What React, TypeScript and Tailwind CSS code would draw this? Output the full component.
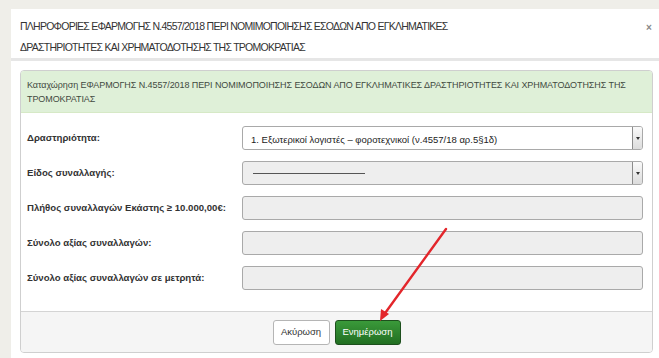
import type { ReactNode } from "react";

const rows = [
  { label: "Δραστηριότητα:", kind: "select", value: "1. Εξωτερικοί λογιστές – φοροτεχνικοί (ν.4557/18 αρ.5§1δ)", disabled: false },
  { label: "Είδος συναλλαγής:", kind: "select", value: "dash", disabled: true },
  { label: "Πλήθος συναλλαγών Εκάστης ≥ 10.000,00€:", kind: "input", value: "", disabled: true },
  { label: "Σύνολο αξίας συναλλαγών:", kind: "input", value: "", disabled: true },
  { label: "Σύνολο αξίας συναλλαγών σε μετρητά:", kind: "input", value: "", disabled: true },
];

function Field({ kind, value, disabled }: { kind: string; value: string; disabled: boolean }) {
  let inner: ReactNode = null;
  if (value === "dash") {
    inner = <span className="ml-[10px] block h-px w-[112px] bg-[#555]" />;
  } else if (value) {
    inner = <span className="pl-[8px] text-[9.5px] text-[#222]">{value}</span>;
  }
  return (
    <div
      className={`flex h-[24px] flex-1 items-center overflow-hidden rounded-[3px] border border-[#a9a9a9] ${
        disabled ? "bg-[#eeeeee]" : "bg-white"
      }`}
    >
      <div className="flex-1">{inner}</div>
      {kind === "select" ? (
        <div className="flex h-full w-[10px] items-center justify-center border-l border-[#8c8c8c] bg-gradient-to-b from-[#fafafa] to-[#dcdcdc]">
          <span className="block h-0 w-0 border-x-[2px] border-t-[3px] border-x-transparent border-t-[#333]" />
        </div>
      ) : null}
    </div>
  );
}

export default function App() {
  return (
    <div
      className="relative h-[358px] w-[659px] overflow-hidden bg-[#efeee9] pl-[11px] pt-[9px]"
      style={{ fontFamily: '"Liberation Sans", Arial, sans-serif' }}
    >
      <div className="flex h-[360px] w-[651px] flex-col bg-white">
        <header className="relative h-[52px] border-b-[3px] border-[#e6e6e6] px-[9px] pt-[7px]">
          <h1 className="w-[470px] text-[10.5px] leading-[21px] tracking-[-0.75px] text-[#333]">
            ΠΛΗΡΟΦΟΡΙΕΣ ΕΦΑΡΜΟΓΗΣ Ν.4557/2018 ΠΕΡΙ ΝΟΜΙΜΟΠΟΙΗΣΗΣ ΕΣΟΔΩΝ ΑΠΟ ΕΓΚΛΗΜΑΤΙΚΕΣ
            ΔΡΑΣΤΗΡΙΟΤΗΤΕΣ ΚΑΙ ΧΡΗΜΑΤΟΔΟΤΗΣΗΣ ΤΗΣ ΤΡΟΜΟΚΡΑΤΙΑΣ
          </h1>
          <span className="absolute left-[635px] top-[11px] text-[10px] font-bold text-[#888]">×</span>
        </header>

        <div className="px-[9px] pt-[9px]">
          <section className="overflow-hidden rounded-[4px] border border-[#cfcfcf]">
            <div className="h-[42px] border-b border-[#d6e9c6] bg-[#dff0d8] px-[6px] pt-[7px] text-[9px] leading-[14px] tracking-[-0.08px] text-[#3f4a3f]">
              Καταχώρηση ΕΦΑΡΜΟΓΗΣ Ν.4557/2018 ΠΕΡΙ ΝΟΜΙΜΟΠΟΙΗΣΗΣ ΕΣΟΔΩΝ ΑΠΟ ΕΓΚΛΗΜΑΤΙΚΕΣ ΔΡΑΣΤΗΡΙΟΤΗΤΕΣ ΚΑΙ ΧΡΗΜΑΤΟΔΟΤΗΣΗΣ ΤΗΣ ΤΡΟΜΟΚΡΑΤΙΑΣ
            </div>

            <div className="flex flex-col gap-[11px] pb-[21px] pl-[6px] pr-[9px] pt-[13px]">
              {rows.map((row) => (
                <div key={row.label} className="flex items-center">
                  <label className="w-[215px] shrink-0 text-[9.6px] font-bold text-[#333]">{row.label}</label>
                  <Field kind={row.kind} value={row.value} disabled={row.disabled} />
                </div>
              ))}
            </div>

            <footer className="flex h-[41px] items-center justify-center gap-[5px] border-t border-[#d4d4d4] bg-[#f5f5f5]">
              <button
                type="button"
                className="h-[25px] w-[57px] rounded-[3px] border border-[#b5b5b5] bg-white text-[9.5px] text-[#333]"
              >
                Ακύρωση
              </button>
              <button
                type="button"
                className="h-[25px] w-[66px] rounded-[3px] border border-[#1d4f1d] bg-gradient-to-b from-[#3a9a3a] to-[#226f22] text-[9.5px] text-white"
              >
                Ενημέρωση
              </button>
            </footer>
          </section>
        </div>
      </div>

      <svg className="pointer-events-none absolute left-0 top-0" width="659" height="358" aria-hidden="true">
        <line x1="446" y1="229" x2="383" y2="316" stroke="#e3262b" strokeWidth="2.4" strokeLinecap="round" />
        <polygon points="380,321 381,309 389,314" fill="#e3262b" />
      </svg>
    </div>
  );
}
